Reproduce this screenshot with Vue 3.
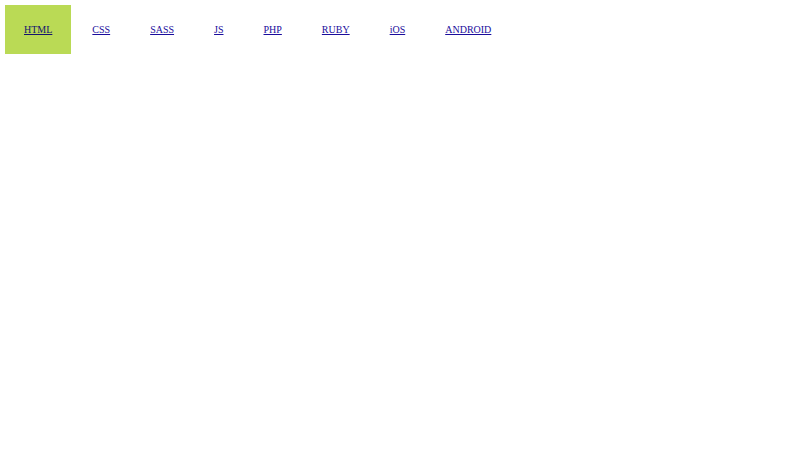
<script setup>
import { ref } from 'vue'

const items = ['HTML', 'CSS', 'SASS', 'JS', 'PHP', 'RUBY', 'iOS', 'ANDROID']

const active = ref('HTML')
</script>

<template>
  <nav class="menu">
    <ul class="menu-list">
      <li v-for="item in items" :key="item" class="menu-item" :class="{ active: item === active }">
        <a href="#" @click.prevent="active = item">{{ item }}</a>
      </li>
    </ul>
  </nav>
</template>

<style>
body {
  margin: 0;
  background: #fff;
}
</style>

<style scoped>
.menu {
  padding: 5px;
  font-family: "Liberation Serif", "Times New Roman", serif;
  font-size: 10px;
  line-height: 11px;
}

.menu-list {
  display: flex;
  flex-wrap: wrap;
  gap: 2px;
  margin: 0;
  padding: 0;
  list-style: none;
}

.menu-item {
  padding: 19px;
}

.menu-item.active {
  background: #bada55;
}

.menu-item a {
  color: #1a0c9c;
}

.menu-item.active a {
  color: #14146e;
}
</style>
